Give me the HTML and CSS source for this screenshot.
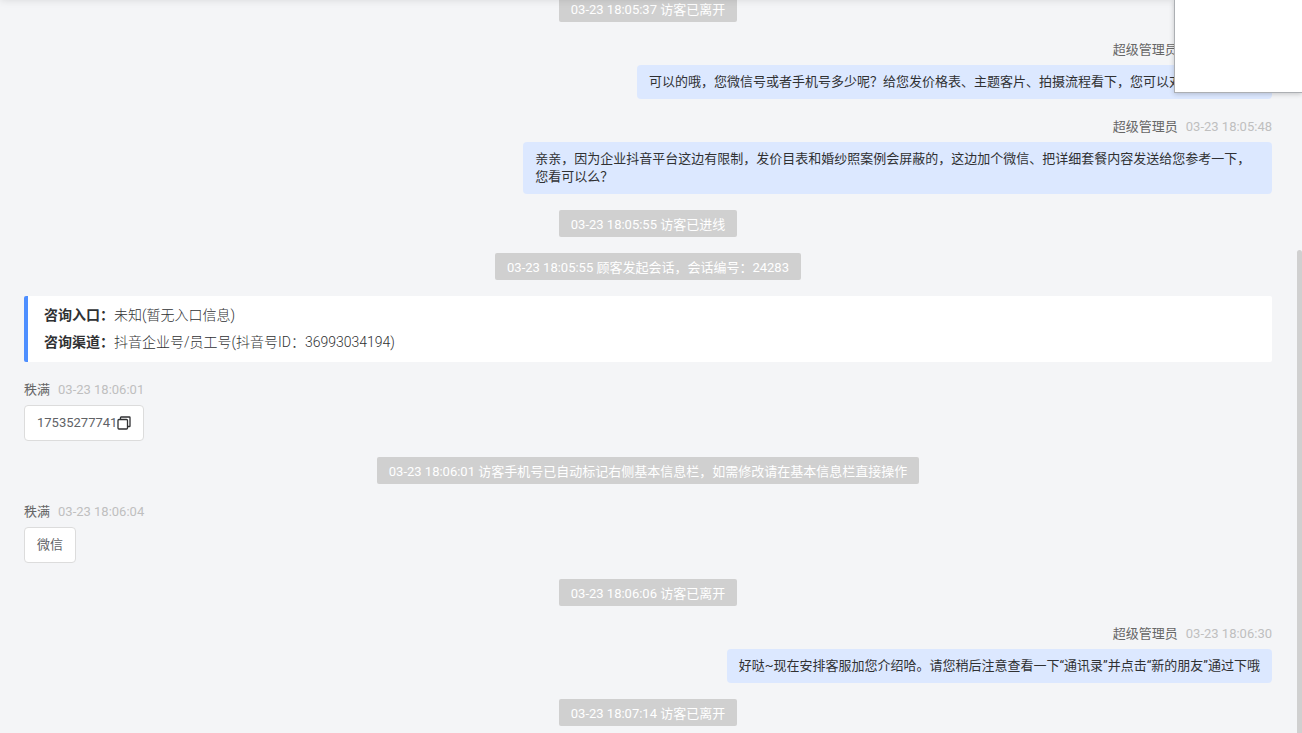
FILE: index.html
```html
<!DOCTYPE html>
<html lang="zh-CN">
<head>
  <meta charset="UTF-8" />
  <meta name="viewport" content="width=device-width, initial-scale=1.0" />
  <title>会话记录</title>
  <link rel="stylesheet" href="styles.css">
</head>
<body>
  <main class="chat">
    <div class="notice">03-23 18:05:37 访客已离开</div>

    <div class="message mine">
      <div class="meta"><span class="name">超级管理员</span><time>03-23 18:05:40</time></div>
      <div class="bubble">可以的哦，您微信号或者手机号多少呢？给您发价格表、主题客片、拍摄流程看下，您可以对比参考一下哦</div>
    </div>

    <div class="message mine">
      <div class="meta"><span class="name">超级管理员</span><time>03-23 18:05:48</time></div>
      <div class="bubble">亲亲，因为企业抖音平台这边有限制，发价目表和婚纱照案例会屏蔽的，这边加个微信、把详细套餐内容发送给您参考一下，您看可以么？</div>
    </div>

    <div class="notice">03-23 18:05:55 访客已进线</div>
    <div class="notice">03-23 18:05:55 顾客发起会话，会话编号：24283</div>

    <div class="source">
      <div><b>咨询入口：</b>未知(暂无入口信息)</div>
      <div><b>咨询渠道：</b>抖音企业号/员工号(抖音号ID：36993034194)</div>
    </div>

    <div class="message">
      <div class="meta"><span class="name">秩满</span><time>03-23 18:06:01</time></div>
      <div class="bubble">17535277741<button class="copy" type="button" aria-label="复制">
          <svg width="14" height="14" viewBox="0 0 14 14" fill="none" stroke="#303133">
            <rect x="1" y="3.5" width="9.5" height="9.5" rx="1" stroke-width="1.3" />
            <path d="M3.5 3.5V1.6Q3.5 1 4.1 1H12.4Q13 1 13 1.6V9.9Q13 10.5 12.4 10.5H10.5" stroke-width="1.3" />
          </svg>
        </button></div>
    </div>

    <div class="notice">03-23 18:06:01 访客手机号已自动标记右侧基本信息栏，如需修改请在基本信息栏直接操作</div>

    <div class="message">
      <div class="meta"><span class="name">秩满</span><time>03-23 18:06:04</time></div>
      <div class="bubble">微信</div>
    </div>

    <div class="notice">03-23 18:06:06 访客已离开</div>

    <div class="message mine">
      <div class="meta"><span class="name">超级管理员</span><time>03-23 18:06:30</time></div>
      <div class="bubble">好哒~现在安排客服加您介绍哈。请您稍后注意查看一下“通讯录”并点击“新的朋友”通过下哦</div>
    </div>

    <div class="notice">03-23 18:07:14 访客已离开</div>
  </main>

  <div class="scroll-thumb"></div>
  <div class="popup"></div>
</body>
</html>
```
FILE: styles.css
```css
* {
  box-sizing: border-box;
}
body {
  margin: 0;
  position: relative;
  height: 100vh;
  overflow: hidden;
  background-color: #f4f5f7;
  font-family: Roboto, "Noto Sans CJK SC", sans-serif;
  font-size: 13px;
  line-height: 18px;
  color: #303133;
}
/* shadow of the bar above the list */
body::before {
  content: "";
  position: absolute;
  z-index: 1;
  left: 0;
  right: 0;
  top: -10px;
  height: 10px;
  box-shadow: 0 0 8px rgba(0,0,0,0.12);
}

/* stays scrolled to the last message */
.chat {
  display: flex;
  flex-direction: column;
  justify-content: flex-end;
  gap: 16px;
  height: 100%;
  padding: 0 30px 7px 24px;
}
.chat > * {
  flex-shrink: 0;
}
.notice {
  align-self: center;
  padding: 2px 12px 0;
  line-height: 25px;
  border-radius: 2px;
  background-color: #d0d0d0;
  color: #fff;
}
.message {
  display: flex;
  flex-direction: column;
  align-items: flex-start;
  gap: 3px;
}
.meta {
  display: flex;
  gap: 8px;
  line-height: 24px;
}
.name {
  color: #666;
}
time {
  color: #bfbfbf;
}
.bubble {
  display: flex;
  align-items: center;
  max-width: 60%;
  padding: 8px 12px;
  border: 1px solid #dcdcdc;
  border-radius: 4px;
  background-color: #fff;
  color: #606266;
}
.mine {
  align-items: flex-end;
}
.mine .bubble {
  border: none;
  background-color: #dce8ff;
  color: #303133;
}
.copy {
  display: flex;
  padding: 0;
  border: none;
  background: none;
  cursor: pointer;
}
.source {
  padding: 6px 16px;
  border-left: 4px solid #4e8fff;
  border-radius: 2px;
  background-color: #fff;
  font-size: 14px;
  font-weight: 300;
  line-height: 27px;
}
.source b {
  font-weight: 700;
}

.scroll-thumb {
  position: absolute;
  top: 250px;
  right: 0;
  bottom: 0;
  width: 5px;
  border-radius: 3px 3px 0 0;
  background-color: #d0d0d0;
}
.popup {
  position: absolute;
  z-index: 2;
  top: 0;
  right: 0;
  width: 128px;
  height: 93px;
  border: solid #acafb3;
  border-width: 0 0 1px 1px;
  background-color: #fff;
  box-shadow: 0 1px 5px rgba(0,0,0,0.2);
}
```
